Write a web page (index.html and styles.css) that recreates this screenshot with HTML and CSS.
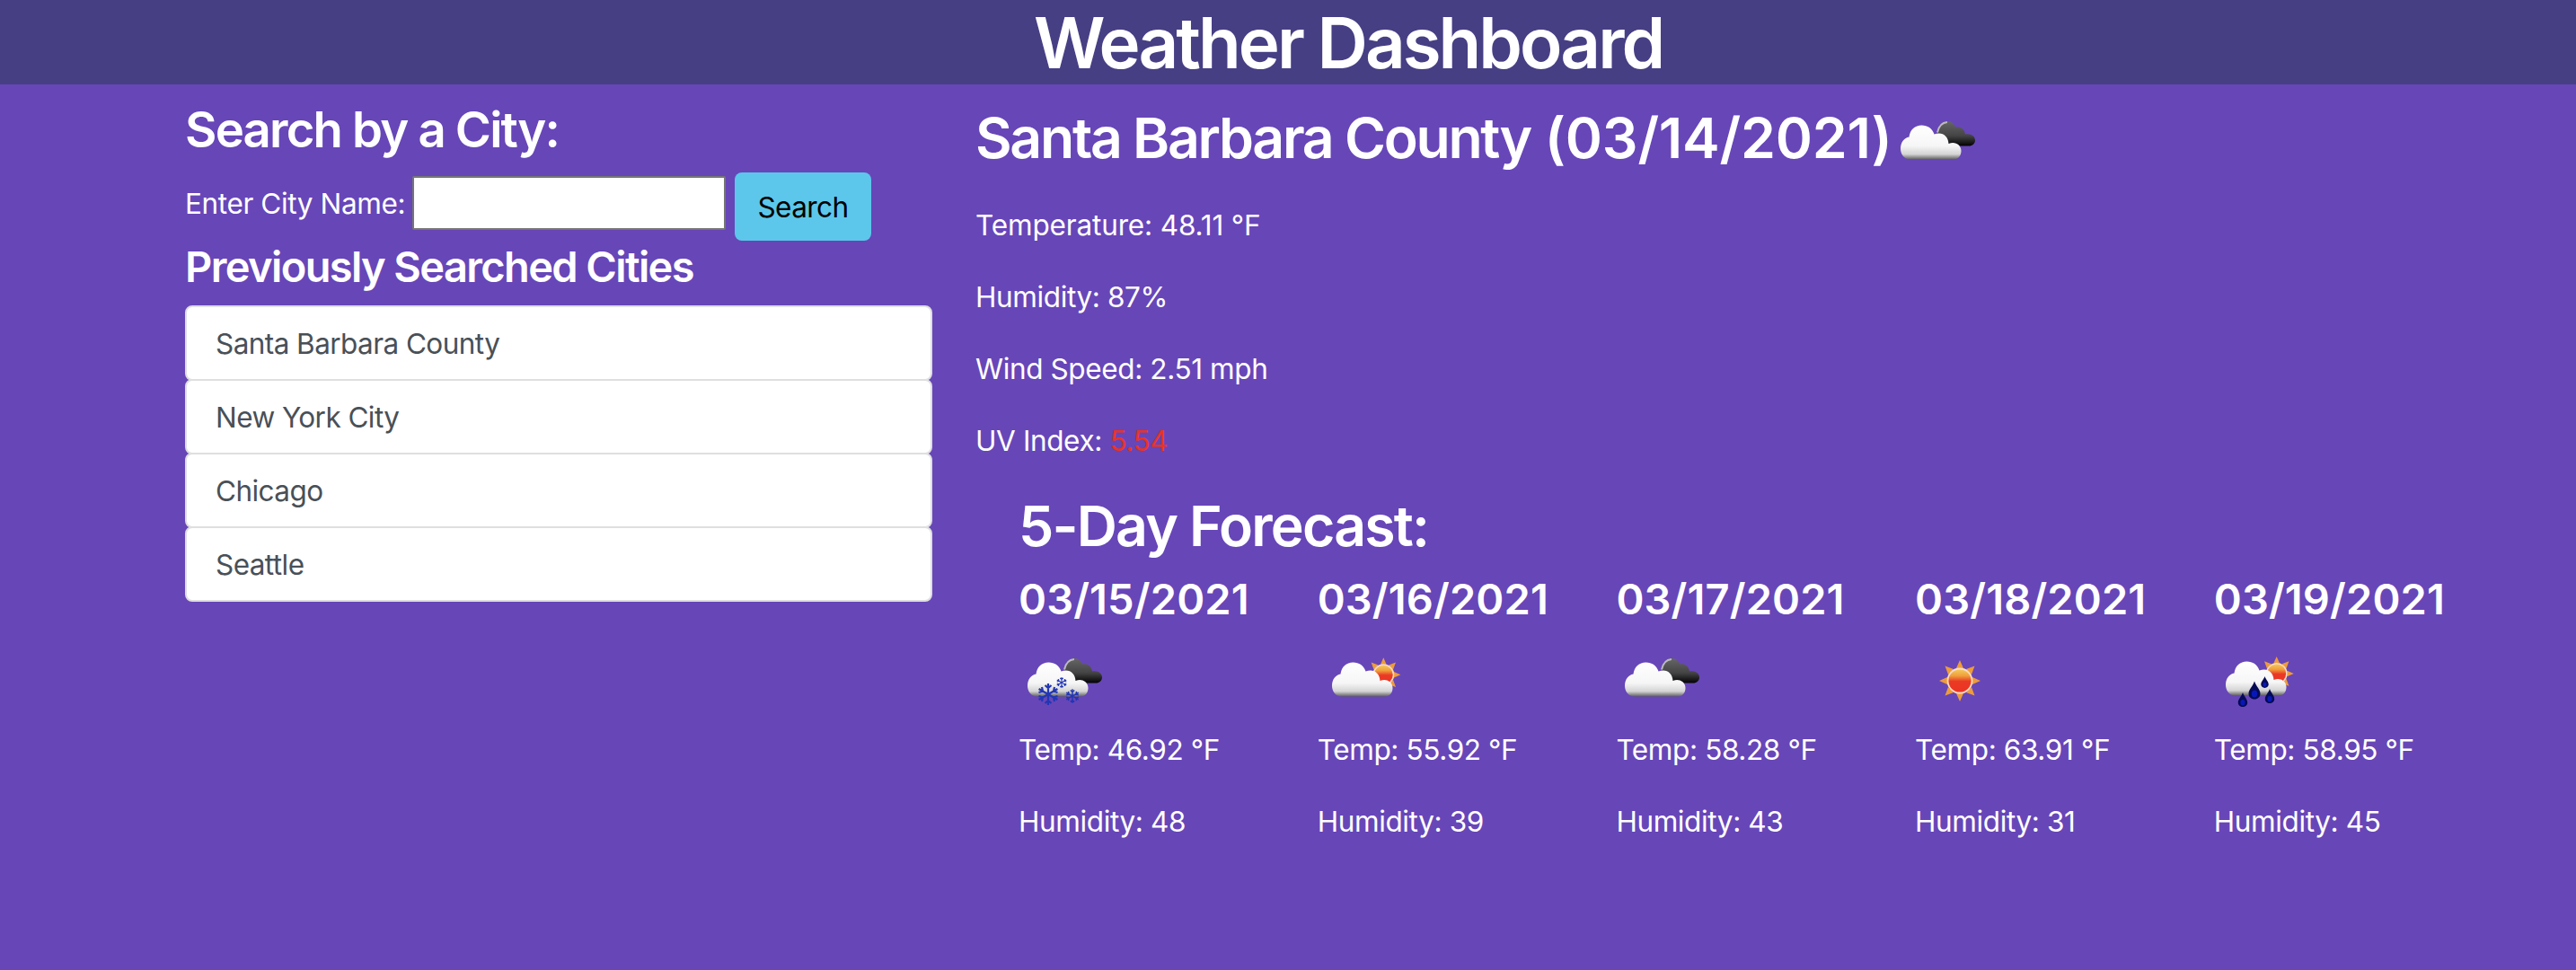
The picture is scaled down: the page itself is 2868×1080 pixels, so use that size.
FILE: index.html
```html
<!DOCTYPE html>
<html lang="en">
<head>
<meta charset="utf-8">
<title>Weather Dashboard</title>
<link rel="stylesheet" href="styles.css">
</head>
<body>
<svg class="defs" aria-hidden="true">
  <defs>
    <linearGradient id="white" x1="0" y1="29" x2="0" y2="68" gradientUnits="userSpaceOnUse">
      <stop offset="0" stop-color="#fff"/><stop offset=".6" stop-color="#f6f6f6"/><stop offset=".84" stop-color="#d4d4d4"/><stop offset="1" stop-color="#555"/>
    </linearGradient>
    <linearGradient id="dark" x1="0" y1="25" x2="0" y2="52" gradientUnits="userSpaceOnUse">
      <stop offset="0" stop-color="#666"/><stop offset=".6" stop-color="#444"/><stop offset="1" stop-color="#050505"/>
    </linearGradient>
    <linearGradient id="core" x1="0" y1="-14" x2="0" y2="14" gradientUnits="userSpaceOnUse">
      <stop offset="0" stop-color="#f5d060"/><stop offset=".3" stop-color="#f0a03c"/><stop offset=".52" stop-color="#ea3a24"/><stop offset="1" stop-color="#ec3323"/>
    </linearGradient>
    <path id="cloud" fill="url(#white)" d="M20 67.500C13.500 67 10 61.500 10 55.500C10 48.500 14 43.500 19.500 42.500C20.500 34.500 26 29.500 33.500 29.500C40 29.500 45.500 33 47.500 39.500C56 36 63 41 63.500 50C71 47 77.500 51.500 77.500 58C77.500 63.500 74 67.500 69 67.500Z"/>
    <g id="darkcloud">
      <path fill="url(#dark)" d="M51 38C52 30 56 25 62 25C66.500 25 69.500 27.500 71 31.500C76 30.500 81 33 82 39.500C88 38 93 41.500 93 46C93 50 90 52.500 86 52.500H58Z"/>
      <path fill="none" stroke="#bbb" stroke-width="2" d="M51 37.500C52.500 30 56 26.500 62 26"/>
    </g>
    <g id="sun">
      <path fill="#ee9c3a" d="M0-23L4-14L-4-14ZM0 23L4 14L-4 14ZM-23 0L-14-4L-14 4ZM23 0L14-4L14 4ZM-16.500-16.500L-7-13L-13-7ZM16.500-16.500L7-13L13-7ZM-16.500 16.500L-7 13L-13 7ZM16.500 16.500L7 13L13 7Z"/>
      <circle r="13.500" fill="url(#core)" stroke="#fbdcc0" stroke-width="1.800"/>
    </g>
    <g id="flake" fill="none" stroke="#2236b4" stroke-width="2.200">
      <path d="M0-12V12M-10.400-6L10.400 6M-10.400 6L10.400-6M-3.500-10L0-7L3.500-10M-3.500 10L0 7L3.500 10M-10.500-2L-6-3.500L-7-8M10.500-2L6-3.500L7-8M-10.500 2L-6 3.500L-7 8M10.500 2L6 3.500L7 8"/>
    </g>
    <g id="drop">
      <path fill="#050a55" d="M0-10C2-4 6.500-1 6.500 4C6.500 7.500 3.500 10 0 10C-3.500 10-6.500 7.500-6.500 4C-6.500-1-2-4 0-10Z"/>
      <ellipse cy="4" rx="3.200" ry="4" fill="#0818b8"/>
    </g>
  </defs>
</svg>

<header class="banner"><h1>Weather Dashboard</h1></header>

<main class="layout">
  <section class="sidebar">
    <h3>Search by a City:</h3>
    <form class="search">
      <label for="city">Enter City Name:</label>
      <input id="city" type="text">
      <button type="button">Search</button>
    </form>
    <h4>Previously Searched Cities</h4>
    <ul class="cities">
      <li>Santa Barbara County</li>
      <li>New York City</li>
      <li>Chicago</li>
      <li>Seattle</li>
    </ul>
  </section>

  <section class="weather">
    <div class="current">
      <h2><span class="name">Santa Barbara County</span> <span class="date">(03/14/2021)</span></h2>
      <svg class="icon" viewBox="0 0 100 100"><use href="#darkcloud"/><use href="#cloud"/></svg>
    </div>
    <p class="temperature">Temperature: 48.11 °F</p>
    <p>Humidity: 87%</p>
    <p>Wind Speed: 2.51 mph</p>
    <p>UV Index: <span class="uv">5.54</span></p>

    <div class="forecast">
      <h2 class="title">5-Day Forecast:</h2>
      <div class="days">
        <article class="day">
          <h4>03/15/2021</h4>
          <svg class="icon" viewBox="0 0 100 100"><use href="#darkcloud"/><use href="#cloud"/><use href="#flake" transform="translate(33 65)"/><use href="#flake" transform="translate(48 52) scale(.5)"/><use href="#flake" transform="translate(60 67) scale(.65)"/></svg>
          <p>Temp: 46.92 °F</p>
          <p>Humidity: 48</p>
        </article>
        <article class="day">
          <h4>03/16/2021</h4>
          <svg class="icon" viewBox="0 0 100 100"><use href="#sun" transform="translate(73.300 43.300) scale(.83)"/><use href="#cloud" x="6"/></svg>
          <p>Temp: 55.92 °F</p>
          <p>Humidity: 39</p>
        </article>
        <article class="day">
          <h4>03/17/2021</h4>
          <svg class="icon" viewBox="0 0 100 100"><use href="#darkcloud"/><use href="#cloud"/></svg>
          <p>Temp: 58.28 °F</p>
          <p>Humidity: 43</p>
        </article>
        <article class="day">
          <h4>03/18/2021</h4>
          <svg class="icon" viewBox="0 0 100 100"><use href="#sun" transform="translate(50 50)"/></svg>
          <p>Temp: 63.91 °F</p>
          <p>Humidity: 31</p>
        </article>
        <article class="day">
          <h4>03/19/2021</h4>
          <svg class="icon" viewBox="0 0 100 100"><use href="#sun" transform="translate(69.700 42) scale(.83)"/><use href="#cloud" x="3" y="-1"/><use href="#drop" transform="translate(32 71) scale(.8)"/><use href="#drop" transform="translate(45 60.500)"/><use href="#drop" transform="translate(56.500 51.500) scale(.65)"/><use href="#drop" transform="translate(62 67) scale(.8)"/></svg>
          <p>Temp: 58.95 °F</p>
          <p>Humidity: 45</p>
        </article>
      </div>
    </div>
  </section>
</main>
</body>
</html>
```
FILE: styles.css
```css
* {
  box-sizing: border-box;
}

body {
  margin: 0;
  min-height: 100vh;
  background: #6746b8;
  color: #fff;
  font: 400 31.5px/48px Inter, "Liberation Sans", sans-serif;
  letter-spacing: -0.012em;
}

h1, h2, h3, h4, p, ul {
  margin: 0;
}

h1, h2, h3, h4 {
  font-weight: 600;
  white-space: nowrap;
}

h1 {
  font-size: 78px;
  line-height: 96px;
  letter-spacing: -0.0382em;
}

h2 {
  font-size: 62.5px;
  line-height: 77px;
  letter-spacing: 0;
}

.name {
  letter-spacing: -0.0367em;
}

.date {
  letter-spacing: -0.0033em;
}

.title {
  letter-spacing: -0.029em;
}

h3 {
  font-size: 54.5px;
  line-height: 67px;
  letter-spacing: -0.0333em;
}

h4 {
  font-size: 47px;
  line-height: 58px;
  letter-spacing: 0.0028em;
}

.sidebar h4 {
  letter-spacing: -0.0345em;
}

.defs {
  display: block;
  width: 0;
  height: 0;
}

.banner {
  height: 94px;
  padding-left: 134px;
  background: #463f84;
  text-align: center;
}

.layout {
  display: flex;
  gap: 48px;
  padding: 16px 0 0 206px;
}

.sidebar {
  width: 832px;
}

.sidebar h3 {
  padding-top: 1px;
}

.search {
  display: flex;
  align-items: flex-start;
  margin-top: 14px;
}

.search label {
  width: 253px;
  margin-top: 11px;
  white-space: nowrap;
}

.search input {
  width: 349px;
  height: 60px;
  margin-top: 4px;
  border: 2px solid #767676;
  border-radius: 2px;
  background: #fff;
}

.search button {
  width: 152px;
  height: 76px;
  margin-left: 10px;
  padding: 2px 0 0;
  border: 0;
  border-radius: 8px;
  background: #5cc7eb;
  color: #000;
  font: inherit;
  letter-spacing: -0.018em;
}

.cities {
  margin-top: 14px;
  padding: 0;
  list-style: none;
}

.cities li {
  height: 84px;
  padding: 17px 32px 15px;
  border: 2px solid #dfdfdf;
  border-radius: 8px;
  background: #fff;
  color: #495057;
  letter-spacing: -0.018em;
}

.cities li + li {
  margin-top: -2px;
}

.icon {
  display: block;
  width: 100px;
  height: 100px;
}

.current {
  display: flex;
  align-items: flex-start;
  height: 117px;
}

.current h2 {
  width: 1020px;
  margin-top: 5px;
}

.weather p + p {
  margin-top: 32px;
}

.temperature {
  letter-spacing: -0.0046em;
}

.uv {
  color: #ea3323;
}

.forecast {
  padding: 32px 0 0 48px;
}

.days {
  display: grid;
  grid-template-columns: repeat(5, 332.7px);
  margin-top: 14px;
}

.day .icon {
  margin: 12px 0 3px;
}
```
